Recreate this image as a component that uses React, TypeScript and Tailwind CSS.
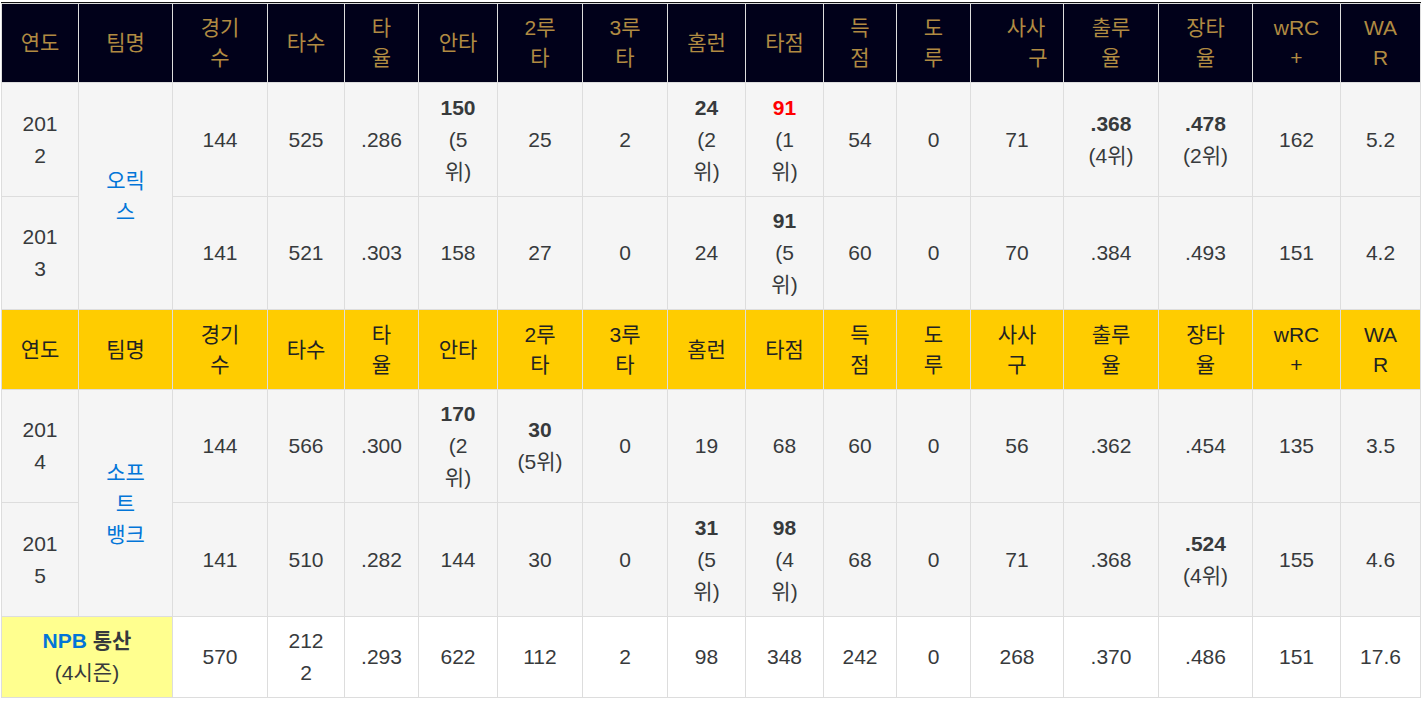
import React from 'react';

type Cell = React.ReactNode;

const widths = [77, 94, 95, 77, 74, 79, 85, 85, 78, 78, 73, 74, 93, 95, 94, 88, 80];

const heads: Cell[] = [
  '연도', '팀명', <>경기<br />수</>, '타수', <>타<br />율</>, '안타', <>2루<br />타</>, <>3루<br />타</>,
  '홈런', '타점', <>득<br />점</>, <>도<br />루</>, null, <>출루<br />율</>, <>장타<br />율</>,
  <>wRC<br />+</>, <>WA<br />R</>,
];

// 굵은 기록 + 순위
const Rank = ({ v, r, red }: { v: string; r: Cell; red?: boolean }) => (
  <>
    <b className={red ? 'text-[#ff0000]' : ''}>{v}</b>
    <br />
    {r}
  </>
);

const Td = ({ children, className = '' }: { children?: Cell; className?: string }) => (
  <td className={`border border-[#dddddd] px-1 text-center align-middle ${className}`}>{children}</td>
);

const HeadRow = ({ dark }: { dark?: boolean }) => (
  <tr className={dark ? 'h-[79px] bg-[#01011a] text-[#b08b42]' : 'h-[80px] bg-[#ffcc00] text-[#222222]'}>
    {heads.map((h, i) => (
      <td key={i} className="border border-[#dddddd] px-1 text-center align-middle leading-[30px]">
        {i === 12 ? (
          dark ? (
            <>
              <span className="block pl-[18px]">사사</span>
              <span className="block pl-[42px]">구</span>
            </>
          ) : (
            <>사사<br />구</>
          )
        ) : (
          h
        )}
      </td>
    ))}
  </tr>
);

const Row = ({ cells, h }: { cells: Cell[]; h: string }) => (
  <tr className={`${h} bg-[#f5f5f5]`}>
    {cells.map((c, i) => (
      <Td key={i}>{c}</Td>
    ))}
  </tr>
);

const Team = ({ children }: { children: Cell }) => (
  <td rowSpan={2} className="border border-[#dddddd] bg-[#f5f5f5] px-1 text-center align-middle text-[#0275d8] leading-[31px]">
    {children}
  </td>
);

export default function App() {
  return (
    <div className="w-[1422px] h-[702px] bg-white pt-[2px] pl-[1px]" style={{ fontFamily: '"Liberation Sans", "Noto Sans CJK KR", sans-serif' }}>
      <div className="border-t border-[#111111] w-[1420px]">
        <table className="table-fixed border-collapse w-[1419px] text-[21px] leading-[32px] text-[#373a3c]">
          <colgroup>
            {widths.map((w, i) => (
              <col key={i} style={{ width: w }} />
            ))}
          </colgroup>
          <tbody>
            <HeadRow dark />

            <tr className="h-[114px] bg-[#f5f5f5]">
              <Td>201<br />2</Td>
              <Team>오릭<br />스</Team>
              <Td>144</Td>
              <Td>525</Td>
              <Td>.286</Td>
              <Td><Rank v="150" r={<>(5<br />위)</>} /></Td>
              <Td>25</Td>
              <Td>2</Td>
              <Td><Rank v="24" r={<>(2<br />위)</>} /></Td>
              <Td><Rank v="91" red r={<>(1<br />위)</>} /></Td>
              <Td>54</Td>
              <Td>0</Td>
              <Td>71</Td>
              <Td><Rank v=".368" r="(4위)" /></Td>
              <Td><Rank v=".478" r="(2위)" /></Td>
              <Td>162</Td>
              <Td>5.2</Td>
            </tr>
            <Row
              h="h-[113px]"
              cells={[
                <>201<br />3</>, '141', '521', '.303', '158', '27', '0', '24',
                <Rank v="91" r={<>(5<br />위)</>} />, '60', '0', '70', '.384', '.493', '151', '4.2',
              ]}
            />

            <HeadRow />

            <tr className="h-[113px] bg-[#f5f5f5]">
              <Td>201<br />4</Td>
              <Team>소프<br />트<br />뱅크</Team>
              <Td>144</Td>
              <Td>566</Td>
              <Td>.300</Td>
              <Td><Rank v="170" r={<>(2<br />위)</>} /></Td>
              <Td><Rank v="30" r="(5위)" /></Td>
              <Td>0</Td>
              <Td>19</Td>
              <Td>68</Td>
              <Td>60</Td>
              <Td>0</Td>
              <Td>56</Td>
              <Td>.362</Td>
              <Td>.454</Td>
              <Td>135</Td>
              <Td>3.5</Td>
            </tr>
            <Row
              h="h-[114px]"
              cells={[
                <>201<br />5</>, '141', '510', '.282', '144', '30', '0',
                <Rank v="31" r={<>(5<br />위)</>} />, <Rank v="98" r={<>(4<br />위)</>} />,
                '68', '0', '71', '.368', <Rank v=".524" r="(4위)" />, '155', '4.6',
              ]}
            />

            {/* 통산 */}
            <tr className="h-[81px] bg-white">
              <td colSpan={2} className="border border-[#dddddd] bg-[#ffff8f] px-1 text-center align-middle">
                <b><span className="text-[#0275d8]">NPB</span> 통산</b>
                <br />
                (4시즌)
              </td>
              {['570', <>212<br />2</>, '.293', '622', '112', '2', '98', '348', '242', '0', '268', '.370', '.486', '151', '17.6'].map((c, i) => (
                <Td key={i}>{c}</Td>
              ))}
            </tr>
          </tbody>
        </table>
      </div>
    </div>
  );
}
